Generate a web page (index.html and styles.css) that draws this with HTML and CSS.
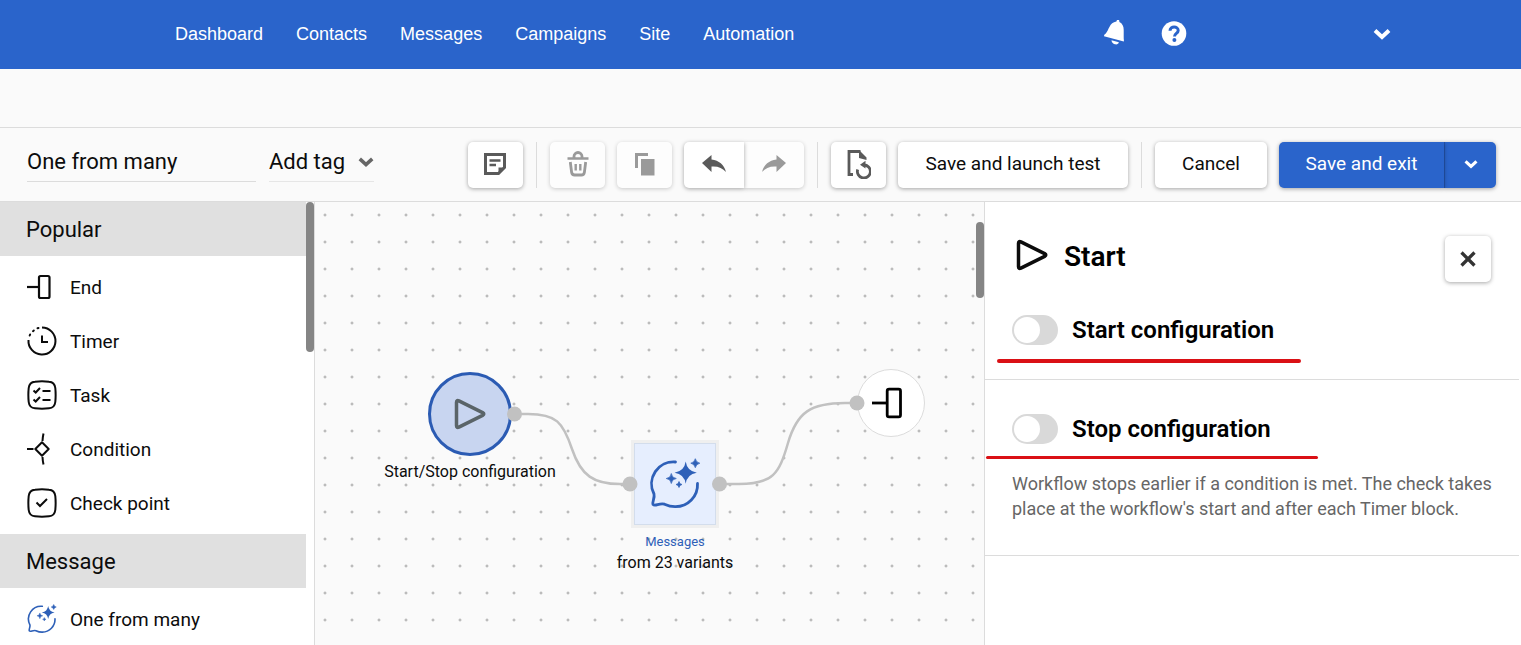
FILE: index.html
```html
<!DOCTYPE html>
<html lang="en">

<head>
    <meta charset="UTF-8">
    <meta name="viewport" content="width=device-width, initial-scale=1">
    <title>One from many</title>
    <link rel="stylesheet" href="styles.css">
</head>

<body>
    <!-- shared icons -->
    <svg class="sprite" aria-hidden="true">
        <symbol id="i-chevron" viewBox="0 0 18 12">
            <path d="M2 2.500l7 6.500 7-6.500" fill="none" stroke="currentColor" stroke-width="4" />
        </symbol>
        <symbol id="i-play" viewBox="0 0 32 32">
            <path d="M2.500 4.400v23.200q0 2.600 2.400 1.500L28.600 17.400q2.400-1.400 0-2.800L4.900 2.900Q2.500 1.800 2.500 4.400z" fill="none" stroke="currentColor" stroke-width="3.500" stroke-linejoin="round" />
        </symbol>
        <symbol id="i-end" viewBox="0 0 30 30">
            <path d="M0 15h12" fill="none" stroke="currentColor" stroke-width="2.200" />
            <rect x="12" y="4" width="10.500" height="22" rx="1.500" fill="none" stroke="currentColor" stroke-width="2.200" />
        </symbol>
        <symbol id="i-variants" viewBox="0 0 52 52">
            <path d="M26.500 4A22 22 0 0 0 5 36C6 40 3 43.500 4 46.500 6 49 10.500 44.500 15.500 46.200 20 48.300 23 48.700 26 48.700A22 22 0 0 0 48.500 25.500" fill="none" stroke="currentColor" stroke-width="2.800" stroke-linecap="round" />
            <path d="M36.700 3.600q1.400 9.700 11.100 11.100-9.700 1.400-11.100 11.100-1.400-9.700-11.100-11.100 9.700-1.400 11.100-11.100z" fill="currentColor" />
            <path d="M46.300.700q.8 3.700 4.500 4.500-3.700.8-4.500 4.500-.8-3.700-4.500-4.500 3.700-.8 4.500-4.500z" fill="currentColor" stroke="currentColor" stroke-width=".700" />
            <path d="M22.300 15.500q.5 4.500 5 5-4.500.5-5 5-.5-4.500-5-5 4.500-.5 5-5z" fill="currentColor" stroke="currentColor" stroke-width=".700" />
            <path d="M30 23.500q.4 2.600 3 3-2.600.4-3 3-.4-2.600-3-3 2.600-.4 3-3z" fill="currentColor" stroke="currentColor" stroke-width=".700" />
        </symbol>
    </svg>

    <header class="topbar">
        <nav class="nav">
            <a href="#">Dashboard</a>
            <a href="#">Contacts</a>
            <a href="#">Messages</a>
            <a href="#">Campaigns</a>
            <a href="#">Site</a>
            <a href="#">Automation</a>
        </nav>
        <div class="account">
            <button class="icon-btn" type="button" aria-label="Notifications">
                <svg width="24" height="28" viewBox="1 2 24 28" fill="currentColor">
                    <path d="M15.200 1.400c1.100-.4 2 .3 2.100 1.500l.1 1.200c3 1.500 4.300 4.300 4.300 7.600v8.600c0 1 .4 1.700.1 3.200L2 18.300c0-1.700.9-1.900 1.800-2.800C6.900 12.300 7.300 4.400 14.400 3.500z" />
                    <path d="M9.500 22.300l7.400 2c-.5 1.800-2 2.500-4 2-2-.5-3.300-1.900-3.400-4z" />
                </svg>
            </button>
            <button class="icon-btn" type="button" aria-label="Help">
                <svg width="26" height="26" viewBox="0 0 26 26">
                    <circle cx="13" cy="12.500" r="12.300" fill="currentColor" />
                    <path class="cut" d="M9 9.700c0-4.800 8.200-4.800 8.200-.2 0 3-3.700 2.900-3.700 6" fill="none" stroke-width="3" />
                    <circle class="cut-dot" cx="13.400" cy="19" r="2" />
                </svg>
            </button>
            <button class="icon-btn account-menu" type="button" aria-label="Account">
                <svg width="18" height="12"><use href="#i-chevron" /></svg>
            </button>
        </div>
    </header>

    <div class="strip"></div>

    <div class="toolbar">
        <input class="name" type="text" value="One from many" aria-label="Workflow name">
        <div class="tag">
            <select aria-label="Add tag">
                <option>Add tag</option>
            </select>
            <svg width="16" height="12"><use href="#i-chevron" /></svg>
        </div>

        <div class="actions">
            <button class="btn square" type="button" aria-label="Note">
                <svg width="24" height="22" viewBox="0 0 24 22">
                    <path d="M1.500 1.500h19v13l-6 6h-13z" fill="none" stroke="currentColor" stroke-width="3" />
                    <path d="M14.500 21v-6.500H22z" fill="currentColor" />
                    <path d="M5.500 7.500h11M5.500 12h6.500" stroke="currentColor" stroke-width="2.300" />
                </svg>
            </button>
            <span class="sep"></span>
            <button class="btn square" type="button" aria-label="Delete" disabled>
                <svg width="22" height="26" viewBox="0 0 22 26" fill="none" stroke="currentColor">
                    <path d="M.5 7.500h21" stroke-width="2.500" />
                    <path d="M7 7V5.500a4 4 0 0 1 8 0V7" stroke-width="2.800" />
                    <path d="M3.300 11l1.300 10.300q.4 2.700 3 2.700h6.800q2.600 0 3-2.700L18.700 11" stroke-width="2.800" />
                    <path d="M8.700 13v6.500M13.300 13v6.500" stroke-width="2.400" />
                </svg>
            </button>
            <button class="btn square" type="button" aria-label="Copy" disabled>
                <svg width="20" height="24" viewBox="0 0 20 24">
                    <path d="M1.500 16V2.500H13" fill="none" stroke="currentColor" stroke-width="3" />
                    <path d="M6 7h13.500v16.500H6z" fill="currentColor" />
                </svg>
            </button>
            <div class="group">
                <button class="btn" type="button" aria-label="Undo">
                    <svg width="26" height="20" viewBox="0 0 26 20">
                        <path d="M1 9L10.500 1v4.500C18 6.500 23 10.500 25 18c-3.500-4-8-6-14.500-5.500V18z" fill="currentColor" />
                    </svg>
                </button>
                <button class="btn" type="button" aria-label="Redo" disabled>
                    <svg width="26" height="20" viewBox="0 0 26 20">
                        <path d="M25 9L15.500 1v4.500C8 6.500 3 10.500 1 18c3.500-4 8-6 14.500-5.500V18z" fill="currentColor" />
                    </svg>
                </button>
            </div>
            <span class="sep"></span>
            <button class="btn square" type="button" aria-label="Version history">
                <svg width="24" height="30" viewBox="0 0 24 30">
                    <path d="M6 25.500H2v-23h11.500" fill="none" stroke="currentColor" stroke-width="2.800" />
                    <path d="M12 1l7.500 7.500V11L12 9z" fill="currentColor" />
                    <path d="M10.700 20.500a6.500 6.500 0 1 0 6-4.500" fill="none" stroke="currentColor" stroke-width="2.800" />
                    <path d="M18.500 11.800v7.700L13 15.700z" fill="currentColor" />
                </svg>
            </button>
            <button class="btn text launch" type="button">Save and launch test</button>
            <span class="sep"></span>
            <button class="btn text cancel" type="button">Cancel</button>
            <div class="group primary">
                <button class="btn text save" type="button">Save and exit</button>
                <button class="btn more" type="button" aria-label="More save options">
                    <svg width="14" height="10"><use href="#i-chevron" /></svg>
                </button>
            </div>
        </div>
    </div>

    <main class="workspace">
        <aside class="blocks">
            <h2>Popular</h2>
            <ul>
                <li>
                    <svg width="30" height="30"><use href="#i-end" /></svg>
                    End
                </li>
                <li>
                    <svg width="30" height="30" viewBox="0 0 30 30" fill="none" stroke="currentColor" stroke-width="2">
                        <path d="M15 1.500A13.500 13.500 0 1 1 1.500 14" />
                        <path d="M2.700 9.500l.4-1M6 5.200l.8-.7M10.500 2.300l1-.3" stroke-linecap="round" />
                        <path d="M15 9.500v6.500h6" />
                    </svg>
                    Timer
                </li>
                <li>
                    <svg width="30" height="30" viewBox="0 0 30 30" fill="none" stroke="currentColor" stroke-width="2">
                        <path d="M8 1.700q7-.7 14 0 5.600.4 6.300 6.300.7 7 0 14-.7 5.900-6.300 6.300-7 .7-14 0-5.600-.4-6.300-6.300-.7-7 0-14Q2.400 2.100 8 1.700z" />
                        <path d="M6.500 10.500l2.200 2L13 8M6.500 19.500l2.200 2L13 17" />
                        <path d="M15.500 11h8M15.500 20h8" />
                    </svg>
                    Task
                </li>
                <li>
                    <svg width="30" height="32" viewBox="0 -1 30 32" fill="none" stroke="currentColor" stroke-width="2">
                        <path d="M15 8.300l6.700 6.700-6.700 6.700L8.300 15z" stroke-linejoin="round" />
                        <path d="M0 15h6.500M15.500 7q.2-4 1-7.500M15.500 23q.2 4 1 7.500" />
                    </svg>
                    Condition
                </li>
                <li>
                    <svg width="30" height="30" viewBox="0 0 30 30" fill="none" stroke="currentColor" stroke-width="2">
                        <path d="M8 1.700q7-.7 14 0 5.600.4 6.300 6.300.7 7 0 14-.7 5.900-6.300 6.300-7 .7-14 0-5.600-.4-6.300-6.300-.7-7 0-14Q2.400 2.100 8 1.700z" />
                        <path d="M9.500 14.500l3.500 3.500 7-7" />
                    </svg>
                    Check point
                </li>
            </ul>
            <h2>Message</h2>
            <ul>
                <li>
                    <svg class="blue" width="30" height="30"><use href="#i-variants" /></svg>
                    One from many
                </li>
            </ul>
            <span class="thumb"></span>
        </aside>

        <section class="canvas">
            <svg class="edges">
                <path d="M199 212h14C241 212 248 220 257 247S279 282 305 282h10" />
                <path d="M404 282h20C458 282 464 272 473 241S496 201 530 201h12" />
            </svg>

            <div class="node node-start">
                <div class="shape"><svg width="32" height="32"><use href="#i-play" /></svg></div>
                <div class="label">Start/Stop configuration</div>
            </div>
            <div class="node node-messages">
                <div class="shape"><svg width="52" height="52"><use href="#i-variants" /></svg></div>
                <div class="kind">Messages</div>
                <div class="label">from 23 variants</div>
            </div>
            <div class="node node-end">
                <div class="shape"><svg width="38" height="38"><use href="#i-end" /></svg></div>
            </div>

            <svg class="edges ports">
                <circle cx="199.500" cy="212" r="7.500" />
                <circle cx="315" cy="282" r="7.500" />
                <circle cx="404.500" cy="282" r="7.500" />
                <circle cx="542" cy="201" r="7.500" />
            </svg>
            <span class="thumb"></span>
        </section>

        <aside class="panel">
            <section class="config config-start">
                <header class="panel-head">
                    <svg class="head-icon" width="32" height="32"><use href="#i-play" /></svg>
                    <h1>Start</h1>
                    <button class="btn close" type="button" aria-label="Close">
                        <svg width="18" height="18" viewBox="0 0 18 18">
                            <path d="M2.500 2.500l13 13M15.500 2.500l-13 13" stroke="currentColor" stroke-width="3.300" />
                        </svg>
                    </button>
                </header>
                <label class="switch">
                    <input type="checkbox">
                    Start configuration
                </label>
            </section>
            <section class="config config-stop">
                <label class="switch">
                    <input type="checkbox">
                    Stop configuration
                </label>
                <p>Workflow stops earlier if a condition is met. The check takes place at the workflow's start and after each Timer block.</p>
            </section>
        </aside>
    </main>
</body>

</html>
```
FILE: styles.css
```css
* {
    box-sizing: border-box;
}

body {
    margin: 0;
    height: 100vh;
    display: flex;
    flex-direction: column;
    overflow: hidden;
    background: #fafafa;
    color: #0c0c0c;
    font-family: Roboto, "Liberation Sans", sans-serif;
    font-size: 19px;
}

button,
input,
select {
    margin: 0;
    padding: 0;
    border: 0;
    background: none;
    color: inherit;
    font: inherit;
}

svg {
    display: block;
    flex: none;
}

.sprite {
    position: absolute;
    width: 0;
    height: 0;
}

/* top bar */
.topbar {
    flex: none;
    display: flex;
    justify-content: space-between;
    align-items: center;
    height: 69px;
    padding: 0 130px 0 175px;
    background: #2a64cb;
    color: #fff;
}

.nav {
    display: flex;
    gap: 33px;
    font-family: "Liberation Sans", Arial, sans-serif;
    font-size: 18px;
}

.nav a {
    color: #fff;
    text-decoration: none;
}

.account {
    display: flex;
    align-items: center;
    gap: 34px;
    padding-bottom: 2px;
}

.account-menu {
    margin-left: 152px;
}

.cut {
    stroke: #2a64cb;
}

.cut-dot {
    fill: #2a64cb;
}

.strip {
    flex: none;
    height: 59px;
    border-bottom: 1px solid #dcdcdc;
}

/* toolbar */
.toolbar {
    flex: none;
    display: flex;
    align-items: flex-start;
    height: 74px;
    padding: 14px 25px 0 27px;
    border-bottom: 1px solid #dcdcdc;
}

.name {
    width: 229px;
    height: 40px;
    border-bottom: 1px solid #dcdcdc;
    font-size: 22px;
}

.tag {
    display: flex;
    align-items: center;
    margin-left: 13px;
    height: 40px;
    border-bottom: 1px solid #e6e6e6;
    font-size: 22px;
    color: #666;
}

.tag select {
    appearance: none;
    width: 89px;
    height: 39px;
    color: #0c0c0c;
}

.actions {
    display: flex;
    gap: 12px;
    margin-left: auto;
}

.sep {
    width: 1px;
    margin: 0 1px;
    background: #dcdcdc;
}

.btn {
    display: flex;
    align-items: center;
    justify-content: center;
    height: 46px;
    padding-bottom: 2px;
    border-radius: 5px;
    background: #fff;
    box-shadow: 0 1px 4px rgba(0, 0, 0, 0.35);
}

.btn.text {
    padding-bottom: 4px;
}

.btn svg {
    color: #5a5a5a;
}

.btn:disabled {
    background: #fdfdfd;
    box-shadow: 0 1px 4px rgba(0, 0, 0, 0.2);
}

.btn:disabled svg {
    color: #9a9a9a;
}

.square {
    width: 55px;
}

.launch {
    width: 230px;
}

.cancel {
    width: 112px;
}

.group {
    display: flex;
}

.group .btn {
    width: 60px;
}

.group .btn:first-child {
    border-radius: 5px 0 0 5px;
    z-index: 1;
}

.group .btn:last-child {
    border-radius: 0 5px 5px 0;
}

.primary .btn {
    background: #2a64cb;
    color: #fff;
}

.primary .btn svg {
    color: #fff;
}

.primary .save {
    width: 165px;
}

.primary .more {
    width: 52px;
    border-left: 1px solid #2354ae;
}

/* workspace */
.workspace {
    flex: 1;
    display: flex;
    min-height: 0;
}

.thumb {
    position: absolute;
    right: 0;
    width: 8px;
    border-radius: 4px;
    background: #858585;
}

.blocks {
    position: relative;
    flex: none;
    width: 315px;
    padding-right: 8px;
    border-right: 1px solid #dcdcdc;
    background: #fff;
    overflow: hidden;
}

.blocks .thumb {
    top: 0;
    height: 150px;
}

.blocks h2 {
    margin: 0;
    padding: 2px 26px 0;
    line-height: 52px;
    background: #e0e0e0;
    font-size: 22px;
    font-weight: 400;
}

.blocks ul {
    margin: 0;
    padding: 4px 27px;
    list-style: none;
}

.blocks li {
    display: flex;
    align-items: center;
    gap: 13px;
    height: 54px;
}

.blue {
    color: #2e60b8;
}

/* canvas */
.canvas {
    position: relative;
    flex: 1;
    overflow: hidden;
    background-image: radial-gradient(circle at 10px 13px, #9a9a9a 0, transparent 2px);
    background-size: 27px 27px;
}

.canvas .thumb {
    top: 20px;
    height: 76px;
}

.edges {
    position: absolute;
    top: 0;
    left: 0;
    width: 100%;
    height: 100%;
}

.edges path {
    fill: none;
    stroke: #c1c1c1;
    stroke-width: 2.5;
}

.edges circle {
    fill: #c1c1c1;
}

.node {
    position: absolute;
    display: flex;
    flex-direction: column;
    align-items: center;
    width: 200px;
    font-size: 16px;
    line-height: 20px;
}

.shape {
    display: flex;
    align-items: center;
    justify-content: center;
}

.node-start {
    left: 55px;
    top: 170px;
}

.node-start .shape {
    width: 84px;
    height: 84px;
    margin-bottom: 6px;
    border: 3px solid #2b5bb3;
    border-radius: 50%;
    background: #c8d5f0;
    color: #5a6468;
}

.node-messages {
    left: 260px;
    top: 241px;
}

.node-messages .shape {
    width: 82px;
    height: 82px;
    margin-bottom: 6px;
    border: 1px solid #d3ddec;
    background: #e6eefe;
    box-shadow: 0 0 0 3px #efefef;
    color: #2e60b8;
}

.node-messages .kind {
    line-height: 22px;
    font-size: 13px;
    color: #2e60b8;
}

.node-end {
    left: 476px;
    top: 167px;
}

.node-end .shape {
    width: 68px;
    height: 68px;
    border: 1px solid #dcdcdc;
    border-radius: 50%;
    background: #fff;
    color: #000;
}

/* settings panel */
.panel {
    flex: none;
    width: 537px;
    padding-right: 2px;
    border-left: 1px solid #dcdcdc;
    background: #fff;
}

.config {
    position: relative;
    padding: 34px 24px 34px 27px;
    border-bottom: 1px solid #dcdcdc;
}

.panel-head {
    display: flex;
    align-items: flex-start;
    gap: 16px;
    margin-bottom: 33px;
    padding: 0 4px;
}

.head-icon {
    margin-top: 3px;
}

.panel-head h1 {
    margin: 0;
    line-height: 42px;
    font-size: 28px;
    font-weight: 600;
    color: #000;
}

.close {
    width: 46px;
    margin-left: auto;
    padding: 0;
}

.close svg {
    color: #333;
}

.switch {
    display: flex;
    align-items: center;
    gap: 14px;
    height: 30px;
    font-size: 24px;
    font-weight: 600;
    color: #000;
}

.switch input {
    appearance: none;
    width: 46px;
    height: 30px;
    padding: 2px;
    border-radius: 15px;
    background: #d9d9d9;
}

.switch input::before {
    content: "";
    display: block;
    width: 26px;
    height: 26px;
    border-radius: 50%;
    background: #fff;
}

.switch input:checked {
    background: #2a64cb;
}

.switch input:checked::before {
    margin-left: auto;
}

.config p {
    margin: 27px 0 0;
    line-height: 25px;
    font-size: 18px;
    color: #666;
}

/* red highlight under each setting */
.config::after {
    content: "";
    position: absolute;
    height: 4px;
    border-radius: 2px;
    background: #da1015;
}

.config-start::after {
    left: 12px;
    top: 157px;
    width: 304px;
}

.config-stop::after {
    left: 1px;
    top: 76px;
    width: 332px;
    height: 3px;
}
```
